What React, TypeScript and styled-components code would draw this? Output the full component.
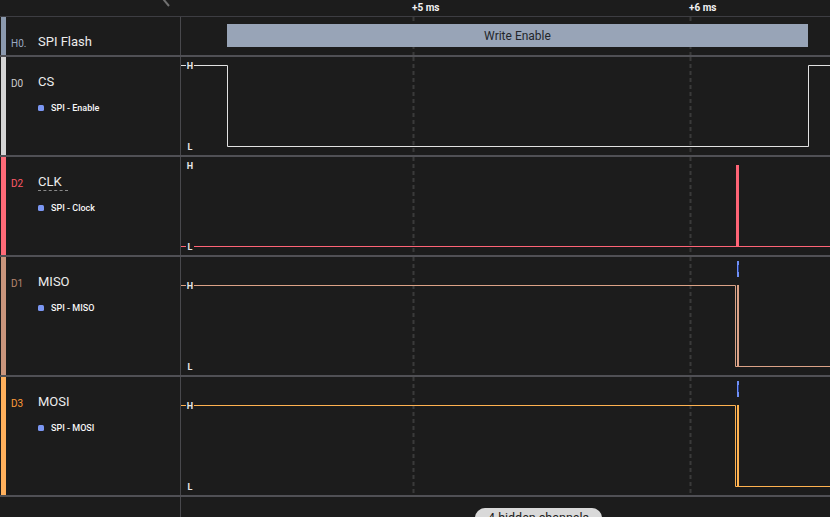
import styled, { createGlobalStyle } from 'styled-components';

const BG = '#1c1c1c';
const WAVE_W = 649;
const GRID_X = [232, 509];

const GlobalStyle = createGlobalStyle`
  html, body {
    margin: 0;
    padding: 0;
    background: ${BG};
  }
  body {
    font-family: Roboto, "Liberation Sans", sans-serif;
  }
`;

const Page = styled.div`
  width: 830px;
  height: 517px;
  overflow: hidden;
  background: ${BG};
  display: flex;
  flex-direction: column;
`;

const Header = styled.div`
  display: flex;
  height: 16px;
  border-bottom: 1px solid #3d3d42;
  flex-shrink: 0;
`;

const HeaderLeft = styled.div`
  width: 181px;
  position: relative;
  flex-shrink: 0;
`;

const Chevron = styled.svg`
  position: absolute;
  left: 162px;
  top: -7px;
`;

const Ruler = styled.div`
  position: relative;
  flex: 1;
`;

const Tick = styled.span`
  position: absolute;
  top: 2px;
  font-size: 10px;
  font-weight: 700;
  color: #f2f2f2;
  line-height: 11px;
`;

const Row = styled.div<{ $h: number }>`
  display: flex;
  height: ${({ $h }) => $h}px;
  border-bottom: 2px solid #505055;
  flex-shrink: 0;
`;

const LabelPanel = styled.div`
  width: 181px;
  box-sizing: border-box;
  border-right: 1px solid #48484c;
  display: flex;
  flex-shrink: 0;
`;

const Strip = styled.div<{ $color: string }>`
  width: 5px;
  margin-left: 1px;
  background: ${({ $color }) => $color};
`;

const LabelBody = styled.div<{ $top: number }>`
  padding: ${({ $top }) => $top}px 0 0 5px;
  display: flex;
  flex-direction: column;
`;

const TitleLine = styled.div`
  display: flex;
  align-items: baseline;
  line-height: 16px;
`;

const ChannelId = styled.span<{ $color: string }>`
  width: 27px;
  font-size: 10px;
  color: ${({ $color }) => $color};
  position: relative;
  top: 1px;
`;

const ChannelName = styled.span<{ $dashed?: boolean }>`
  font-size: 13px;
  color: #ececec;
  padding-right: ${({ $dashed }) => ($dashed ? '6px' : '0')};
  border-bottom: ${({ $dashed }) => ($dashed ? '1px dashed #8a8a8a' : 'none')};
`;

const Decoder = styled.div`
  display: flex;
  align-items: center;
  gap: 7px;
  margin: 11px 0 0 27px;
  font-size: 9px;
  font-weight: 500;
  color: #f6f6f6;
  line-height: 12px;
`;

const Dot = styled.span`
  width: 6px;
  height: 6px;
  border-radius: 1.5px;
  background: #7b96f2;
`;

const WaveArea = styled.div`
  position: relative;
  flex: 1;
`;

const Annotation = styled.div`
  position: absolute;
  left: 46px;
  top: 7px;
  width: 581px;
  height: 23px;
  background: #98a4b7;
  color: #23262b;
  font-size: 12px;
  display: flex;
  align-items: center;
  justify-content: center;
`;

const Footer = styled.div`
  display: flex;
  flex: 1;
`;

const FooterLeft = styled.div`
  width: 181px;
  box-sizing: border-box;
  border-right: 1px solid #48484c;
  flex-shrink: 0;
`;

const FooterBody = styled.div`
  flex: 1;
  padding: 10px 0 0 294px;
`;

const HiddenPill = styled.div`
  display: inline-block;
  padding: 2px 13px;
  border-radius: 10px;
  background: #d9d9d9;
  color: #222;
  font-size: 12.5px;
  line-height: 16px;
`;

const Grid = ({ h }: { h: number }) => (
  <>
    {GRID_X.map((x) => (
      <line key={x} x1={x + 0.5} y1={0} x2={x + 0.5} y2={h} stroke="#3a3a3a" strokeWidth={2} strokeDasharray="4 3" />
    ))}
  </>
);

const Level = ({ y, text }: { y: number; text: string }) => (
  <g>
    <rect x={5} y={y - 4.5} width={8} height={10} fill={BG} />
    <text x={9} y={y + 3.5} textAnchor="middle" fontSize={9} fontWeight={700} fill="#e8e8e8" fontFamily="Roboto, sans-serif">
      {text}
    </text>
  </g>
);

const Marker = () => (
  <g>
    <rect x={556} y={4} width={2} height={16} fill="#6f8ff5" />
    <rect x={557} y={8} width={1} height={7} fill="#24409a" />
  </g>
);

type Channel = {
  id: string;
  name: string;
  decoder: string;
  strip: string;
  idColor: string;
  wave: string;
  h: number;
  high: number;
  low: number;
  kind: 'cs' | 'clk' | 'data';
  dashed?: boolean;
};

const channels: Channel[] = [
  { id: 'D0', name: 'CS', decoder: 'SPI - Enable', strip: '#d4d4d4', idColor: '#cfcfcf', wave: '#e2e2e2', h: 98, high: 8, low: 89, kind: 'cs' },
  { id: 'D2', name: 'CLK', decoder: 'SPI - Clock', strip: '#ff6b78', idColor: '#ff5a68', wave: '#ff6476', h: 98, high: 8, low: 89, kind: 'clk', dashed: true },
  { id: 'D1', name: 'MISO', decoder: 'SPI - MISO', strip: '#c9957c', idColor: '#b8866f', wave: '#dba287', h: 118, high: 28, low: 109, kind: 'data' },
  { id: 'D3', name: 'MOSI', decoder: 'SPI - MOSI', strip: '#ffb05c', idColor: '#ff9c3a', wave: '#ffb250', h: 118, high: 28, low: 109, kind: 'data' },
];

const Wave = ({ c }: { c: Channel }) => {
  const hy = c.high + 0.5;
  const ly = c.low + 0.5;
  return (
    <svg width={WAVE_W} height={c.h} style={{ display: 'block' }}>
      <Grid h={c.h} />
      {c.kind === 'cs' && (
        <path d={`M0 ${hy} H46.5 V${ly} H627.5 V${hy} H${WAVE_W}`} fill="none" stroke={c.wave} strokeWidth={1} />
      )}
      {c.kind === 'clk' && (
        <>
          <path d={`M0 ${ly} H${WAVE_W}`} fill="none" stroke={c.wave} strokeWidth={1} />
          <rect x={555} y={c.high} width={3} height={c.low - c.high + 1} fill={c.wave} />
        </>
      )}
      {c.kind === 'data' && (
        <>
          <path d={`M0 ${hy} H554.5 V${ly} H${WAVE_W}`} fill="none" stroke={c.wave} strokeWidth={1} />
          <rect x={556} y={c.high} width={2} height={c.low - c.high + 1} fill={c.wave} />
          <Marker />
        </>
      )}
      <Level y={c.high + 0.5} text="H" />
      <Level y={c.low + 0.5} text="L" />
    </svg>
  );
};

export default function App() {
  return (
    <Page>
      <GlobalStyle />
      <Header>
        <HeaderLeft>
          <Chevron width="10" height="14" viewBox="0 0 10 14">
            <path d="M7 1 L2 7 L7 13" fill="none" stroke="#707070" strokeWidth={2} />
          </Chevron>
        </HeaderLeft>
        <Ruler>
          <Tick style={{ left: 231 }}>+5 ms</Tick>
          <Tick style={{ left: 508 }}>+6 ms</Tick>
        </Ruler>
      </Header>

      <Row $h={38}>
        <LabelPanel>
          <Strip $color="#8b99ae" />
          <LabelBody $top={17}>
            <TitleLine>
              <ChannelId $color="#9aa9c2">H0.</ChannelId>
              <ChannelName>SPI Flash</ChannelName>
            </TitleLine>
          </LabelBody>
        </LabelPanel>
        <WaveArea>
          <svg width={WAVE_W} height={38} style={{ display: 'block' }}>
            <Grid h={38} />
          </svg>
          <Annotation>Write Enable</Annotation>
        </WaveArea>
      </Row>

      {channels.map((c) => (
        <Row key={c.id} $h={c.h}>
          <LabelPanel>
            <Strip $color={c.strip} />
            <LabelBody $top={17}>
              <TitleLine>
                <ChannelId $color={c.idColor}>{c.id}</ChannelId>
                <ChannelName $dashed={c.dashed}>{c.name}</ChannelName>
              </TitleLine>
              <Decoder>
                <Dot />
                {c.decoder}
              </Decoder>
            </LabelBody>
          </LabelPanel>
          <WaveArea>
            <Wave c={c} />
          </WaveArea>
        </Row>
      ))}

      <Footer>
        <FooterLeft />
        <FooterBody>
          <HiddenPill>4 hidden channels</HiddenPill>
        </FooterBody>
      </Footer>
    </Page>
  );
}
